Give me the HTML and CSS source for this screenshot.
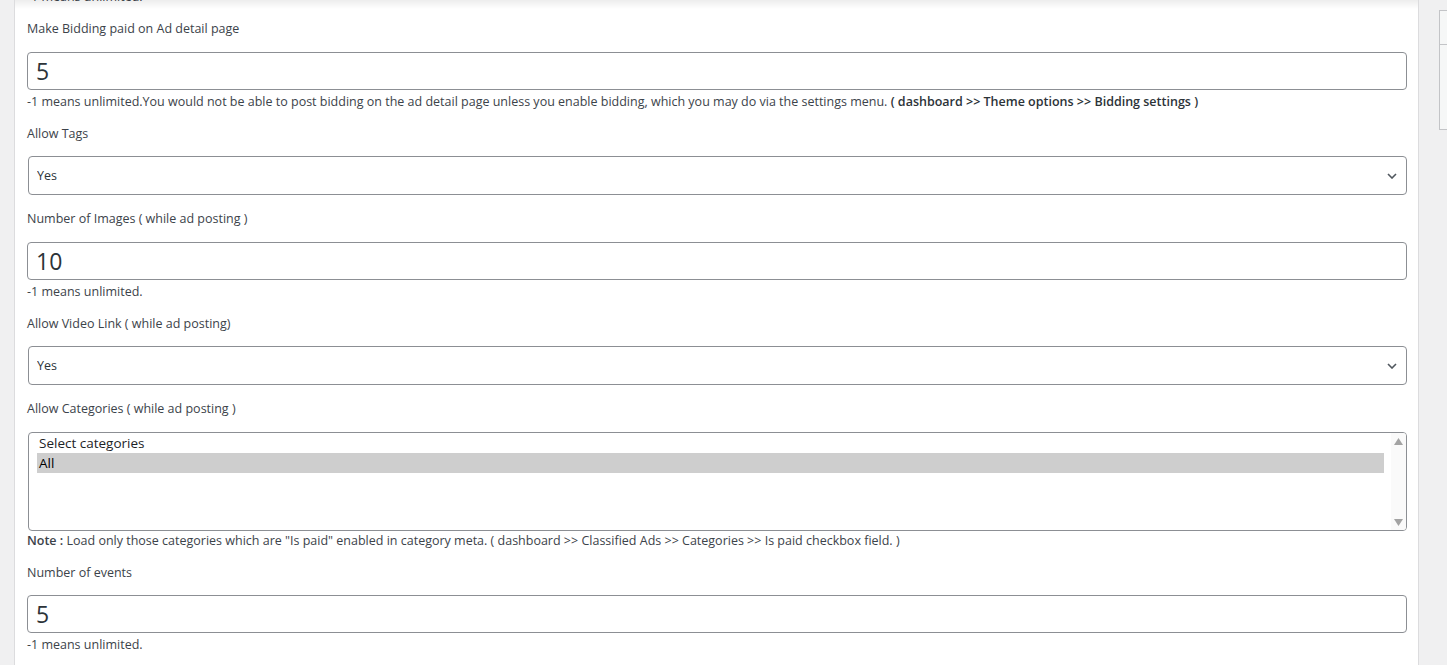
FILE: index.html
```html
<!DOCTYPE html>
<html>
<head>
	<title>Package settings</title>
	<link rel="stylesheet" href="styles.css">
</head>
<body>
	<div class="page">
		<div class="panel">
			<form class="settings">
				<p class="help help-top">-1 means unlimited.</p>

				<div class="field">
					<label class="field-label" for="biddingPaid">Make Bidding paid on Ad detail page</label>
					<input class="text-input" type="number" id="biddingPaid" name="biddingPaid" value="5">
					<p class="help">-1 means unlimited.You would not be able to post bidding on the ad detail page unless you enable bidding, which you may do via the settings menu. <b>( dashboard &gt;&gt; Theme options &gt;&gt; Bidding settings )</b></p>
				</div>

				<div class="field field-select">
					<label class="field-label" for="allowTags">Allow Tags</label>
					<div class="select-wrap">
						<select class="select-input" id="allowTags" name="allowTags">
							<option selected>Yes</option>
							<option>No</option>
						</select>
						<svg class="chevron" width="10" height="6" viewBox="0 0 10 6"><path d="M1 1l4 4 4-4" fill="none" stroke="#50575e" stroke-width="1.6"/></svg>
					</div>
				</div>

				<div class="field">
					<label class="field-label" for="numImages">Number of Images ( while ad posting )</label>
					<input class="text-input" type="number" id="numImages" name="numImages" value="10">
					<p class="help">-1 means unlimited.</p>
				</div>

				<div class="field field-select">
					<label class="field-label" for="allowVideo">Allow Video Link ( while ad posting)</label>
					<div class="select-wrap">
						<select class="select-input" id="allowVideo" name="allowVideo">
							<option selected>Yes</option>
							<option>No</option>
						</select>
						<svg class="chevron" width="10" height="6" viewBox="0 0 10 6"><path d="M1 1l4 4 4-4" fill="none" stroke="#50575e" stroke-width="1.6"/></svg>
					</div>
				</div>

				<div class="field">
					<label class="field-label">Allow Categories ( while ad posting )</label>
					<div class="listbox" role="listbox">
						<div class="listbox-items">
							<div class="list-option">Select categories</div>
							<div class="list-option selected">All</div>
						</div>
						<div class="scrollbar">
							<svg width="9" height="7" viewBox="0 0 9 7"><path d="M4.5 0L9 7H0z" fill="#a3a3a3"/></svg>
							<svg width="9" height="7" viewBox="0 0 9 7"><path d="M0 0h9L4.5 7z" fill="#a3a3a3"/></svg>
						</div>
					</div>
					<p class="help note"><b>Note :</b> Load only those categories which are "Is paid" enabled in category meta. ( dashboard &gt;&gt; Classified Ads &gt;&gt; Categories &gt;&gt; Is paid checkbox field. )</p>
				</div>

				<div class="field">
					<label class="field-label" for="numEvents">Number of events</label>
					<input class="text-input" type="number" id="numEvents" name="numEvents" value="5">
					<p class="help">-1 means unlimited.</p>
				</div>
			</form>
		</div>
		<div class="sidebar">
			<div class="side-box">
				<div class="side-head"></div>
			</div>
		</div>
	</div>
</body>
</html>
```
FILE: styles.css
```css
html, body {
	margin: 0;
	height: 100%;
	overflow: hidden;
}
body {
	font-family: "Open Sans", "Noto Sans", sans-serif;
	font-size: 12.5px;
	color: #3c434a;
	background-color: #f0f0f1;
}
.page {
	display: flex;
	align-items: flex-start;
	height: 100%;
}
.panel {
	position: relative;
	flex: none;
	width: 1380px;
	min-height: 100%;
	margin-left: 14px;
	padding: 0 11px 0 12px;
	background-color: #fff;
	border-left: 1px solid #dcdcde;
	border-right: 1px solid #dcdcde;
}
.panel::before {
	content: "";
	position: absolute;
	left: 0;
	right: 0;
	top: 0;
	height: 9px;
	background: linear-gradient(rgba(0, 0, 0, 0.07), rgba(0, 0, 0, 0));
}
.settings {
	margin: 0;
}
.help {
	margin: 2px 0 0;
	line-height: 20px;
}
.help b {
	font-weight: 600;
	color: #2c3338;
}
.help-top {
	margin-top: -13px;
}
.field {
	margin-top: 12px;
}
.field-select {
	padding-bottom: 2px;
}
.field-label {
	display: block;
	line-height: 20px;
	margin-bottom: 12.5px;
}
.text-input {
	display: block;
	box-sizing: border-box;
	width: 100%;
	height: 38px;
	margin: 0;
	padding: 0 8px;
	font-family: inherit;
	font-size: 23px;
	color: #2c3338;
	background: #fff;
	border: 1px solid #8c8f94;
	border-radius: 4px;
}
.text-input::-webkit-inner-spin-button,
.text-input::-webkit-outer-spin-button {
	-webkit-appearance: none;
	margin: 0;
}
.select-wrap {
	position: relative;
	margin-left: 1px;
}
.select-input {
	display: block;
	box-sizing: border-box;
	width: 100%;
	height: 39px;
	margin: 0;
	padding: 0 28px 0 8px;
	-webkit-appearance: none;
	appearance: none;
	font-family: inherit;
	font-size: 12.5px;
	color: #2c3338;
	background: #fff;
	border: 1px solid #8c8f94;
	border-radius: 4px;
}
.chevron {
	position: absolute;
	right: 10px;
	top: 17px;
	pointer-events: none;
}
.listbox {
	display: flex;
	box-sizing: border-box;
	height: 99px;
	margin-left: 1px;
	border: 1px solid #8c8f94;
	border-radius: 4px;
	background: #fff;
	overflow: hidden;
}
.listbox-items {
	flex: 1;
	padding: 0 7px 0 8px;
}
.list-option {
	padding-left: 2px;
	line-height: 20px;
	font-size: 13.5px;
	color: #1d2327;
}
.list-option.selected {
	background-color: #cecece;
	color: #000;
}
.scrollbar {
	display: flex;
	flex-direction: column;
	justify-content: space-between;
	align-items: center;
	width: 15px;
	padding: 5px 0 4px;
	background-color: #fafafa;
}
.note {
	margin-top: 0;
}
.note b {
	color: #3c434a;
}
.sidebar {
	flex: 1;
	padding: 10px 0 0 20px;
}
.side-box {
	height: 118px;
	background-color: #f6f7f7;
	border: 1px solid #c3c4c7;
	border-right: none;
}
.side-head {
	height: 33px;
	border-bottom: 1px solid #c3c4c7;
}
```
